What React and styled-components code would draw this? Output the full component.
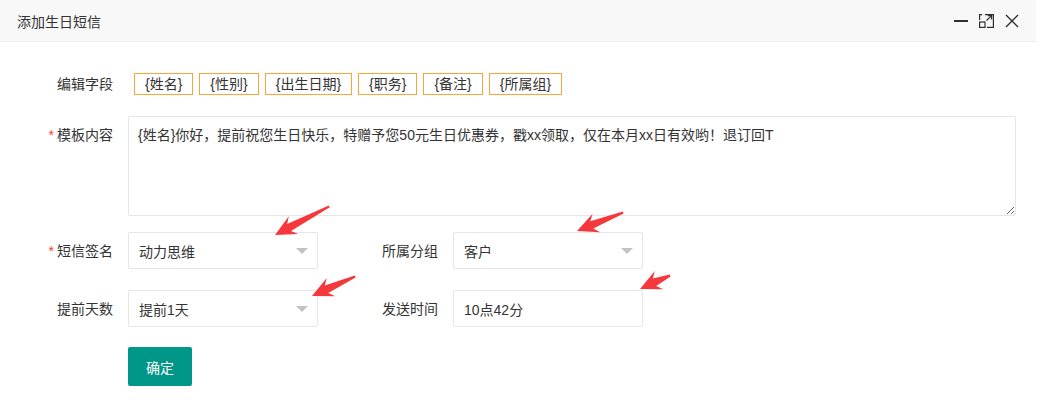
import React from "react";
import styled, { createGlobalStyle } from "styled-components";

const GlobalStyle = createGlobalStyle`
  html, body {
    margin: 0;
    padding: 0;
    background: #ffffff;
  }
  body {
    font-family: "Liberation Sans", "Noto Sans CJK SC", sans-serif;
    color: #333333;
  }
`;

const Page = styled.div`
  position: relative;
  width: 1040px;
  height: 400px;
  overflow: hidden;
`;

const Dialog = styled.div`
  width: 1036px;
  height: 400px;
  background: #ffffff;
`;

// заголовок окна
const TitleBar = styled.div`
  height: 42px;
  box-sizing: border-box;
  display: flex;
  align-items: center;
  justify-content: space-between;
  padding: 0 17px;
  background: #f8f8f8;
  border-bottom: 1px solid #eeeeee;
`;

const Title = styled.div`
  font-size: 14px;
  color: #333333;
`;

const TitleTools = styled.div`
  display: flex;
  align-items: center;
  gap: 11px;
  color: #2f2f2f;

  svg {
    display: block;
  }
`;

const Body = styled.div`
  padding-top: 31px;
`;

const Row = styled.div`
  display: flex;
  align-items: ${(p) => p.$align || "center"};
  margin-top: ${(p) => p.$top || 0}px;
`;

const Label = styled.div`
  width: ${(p) => p.$w}px;
  padding-right: 15px;
  padding-top: ${(p) => p.$pt || 0}px;
  text-align: right;
  font-size: 14px;
  line-height: 20px;
  color: #333333;
  white-space: nowrap;
`;

const Star = styled.span`
  color: #ff3b30;
  margin-right: 3px;
`;

const Tags = styled.div`
  display: flex;
  gap: 6px;
  padding-left: 6px;
`;

const Tag = styled.span`
  height: 22px;
  box-sizing: border-box;
  padding: 0 10px;
  border: 1px solid #f9a53a;
  font-size: 14px;
  line-height: 20px;
  color: #333333;
  white-space: nowrap;
`;

const TextArea = styled.textarea`
  display: block;
  width: 888px;
  height: 100px;
  box-sizing: border-box;
  margin: 0;
  padding: 8px 9px;
  border: 1px solid #e6e6e6;
  border-radius: 2px;
  font-family: "Liberation Sans", "Noto Sans CJK SC", sans-serif;
  font-size: 14px;
  line-height: 20px;
  color: #333333;
  outline: none;
  resize: vertical;
`;

const Box = styled.div`
  width: 190px;
  height: 37px;
  box-sizing: border-box;
  display: flex;
  align-items: center;
  justify-content: space-between;
  padding: 0 9px 0 10px;
  border: 1px solid #e6e6e6;
  border-radius: 2px;
  font-size: 14px;
  color: #333333;
`;

const Caret = styled.span`
  width: 0;
  height: 0;
  border-left: 6px solid transparent;
  border-right: 6px solid transparent;
  border-top: 6px solid #c2c2c2;
`;

const SubmitButton = styled.button`
  margin-left: 128px;
  width: 64px;
  height: 39px;
  border: none;
  border-radius: 2px;
  background: #009688;
  color: #ffffff;
  font-family: "Liberation Sans", "Noto Sans CJK SC", sans-serif;
  font-size: 14px;
  cursor: pointer;
`;

// красные стрелки поверх скриншота
const Overlay = styled.svg`
  position: absolute;
  top: 0;
  left: 0;
  pointer-events: none;
`;

const arrows = [
  { tip: [275, 235], tail: [329, 206] },
  { tip: [577, 231], tail: [623, 212] },
  { tip: [312, 296], tail: [355, 276] },
  { tip: [640, 289], tail: [670, 275] },
];

function arrowPoints({ tip, tail }) {
  const [tx, ty] = tip;
  const [sx, sy] = tail;
  const len = Math.hypot(sx - tx, sy - ty);
  const dx = (sx - tx) / len;
  const dy = (sy - ty) / len;
  const nx = -dy;
  const ny = dx;
  const h = 18;
  const w = 10;
  const pt = (a, b) => `${(tx + dx * a + nx * b).toFixed(1)},${(ty + dy * a + ny * b).toFixed(1)}`;
  return [
    pt(0, 0),
    pt(h + 3, w),
    pt(h - 2, 4),
    pt(len, 1.5),
    pt(len, -0.5),
    pt(h - 2, -4),
    pt(h + 3, -w),
  ].join(" ");
}

const fields = ["{姓名}", "{性别}", "{出生日期}", "{职务}", "{备注}", "{所属组}"];

const template =
  "{姓名}你好，提前祝您生日快乐，特赠予您50元生日优惠券，戳xx领取，仅在本月xx日有效哟！退订回T";

const App = () => {
  return (
    <Page>
      <GlobalStyle />
      <Dialog>
        <TitleBar>
          <Title>添加生日短信</Title>
          <TitleTools>
            <svg width="14" height="14" viewBox="0 0 14 14">
              <rect x="0" y="6" width="14" height="2" fill="currentColor" />
            </svg>
            <svg width="15" height="14" viewBox="0 0 15 14" fill="none" stroke="currentColor" strokeWidth="1.2">
              <path d="M6 0.6 H14.4 V13.4 H8" />
              <path d="M0.6 6 V0.6 H3" />
              <rect x="0.6" y="8" width="5.4" height="5.4" />
              <path d="M7.5 6.5 L12.6 1.6" />
              <path d="M8.8 1.6 H12.6 V5.4" />
            </svg>
            <svg width="14" height="14" viewBox="0 0 14 14" stroke="currentColor" strokeWidth="1.4">
              <path d="M1 1 L13 13 M13 1 L1 13" />
            </svg>
          </TitleTools>
        </TitleBar>
        <Body>
          <Row>
            <Label $w={113}>编辑字段</Label>
            <Tags>
              {fields.map((f) => (
                <Tag key={f}>{f}</Tag>
              ))}
            </Tags>
          </Row>
          <Row $align="flex-start" $top={21}>
            <Label $w={113} $pt={9}>
              <Star>*</Star>模板内容
            </Label>
            <TextArea defaultValue={template} />
          </Row>
          <Row $top={16}>
            <Label $w={113}>
              <Star>*</Star>短信签名
            </Label>
            <Box>
              动力思维
              <Caret />
            </Box>
            <Label $w={120}>所属分组</Label>
            <Box>
              客户
              <Caret />
            </Box>
          </Row>
          <Row $top={21}>
            <Label $w={113}>提前天数</Label>
            <Box>
              提前1天
              <Caret />
            </Box>
            <Label $w={120}>发送时间</Label>
            <Box>10点42分</Box>
          </Row>
          <Row $top={20}>
            <SubmitButton>确定</SubmitButton>
          </Row>
        </Body>
      </Dialog>
      <Overlay width="1040" height="400" viewBox="0 0 1040 400">
        {arrows.map((a, i) => (
          <polygon key={i} points={arrowPoints(a)} fill="#f5383b" />
        ))}
      </Overlay>
    </Page>
  );
};

export default App;
